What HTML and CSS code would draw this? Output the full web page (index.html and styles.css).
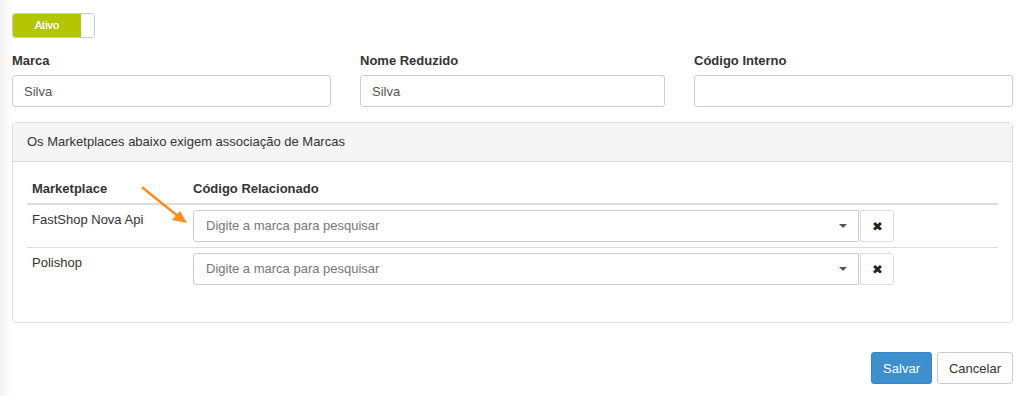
FILE: index.html
```html
<!DOCTYPE html>
<html lang="pt-BR">
<head>
    <meta charset="UTF-8">
    <meta name="viewport" content="width=device-width, initial-scale=1.0">
    <title>Marca</title>
    <link rel="stylesheet" href="styles.css">
</head>
<body>
    <div class="page">
        <div class="switch">
            <span class="switch-on">Ativo</span>
            <span class="switch-off"></span>
        </div>

        <div class="fields">
            <div class="field">
                <label>Marca</label>
                <input type="text" value="Silva">
            </div>
            <div class="field">
                <label>Nome Reduzido</label>
                <input type="text" value="Silva">
            </div>
            <div class="field">
                <label>Código Interno</label>
                <input type="text" value="">
            </div>
        </div>

        <div class="panel">
            <div class="panel-heading">Os Marketplaces abaixo exigem associação de Marcas</div>
            <div class="panel-body">
                <table class="grid">
                    <thead>
                        <tr>
                            <th class="col-mp">Marketplace</th>
                            <th>Código Relacionado</th>
                        </tr>
                    </thead>
                    <tbody>
                        <tr>
                            <td class="col-mp">FastShop Nova Api</td>
                            <td>
                                <div class="picker">
                                    <div class="combo">
                                        <span class="placeholder">Digite a marca para pesquisar</span>
                                        <span class="caret"></span>
                                    </div>
                                    <button type="button" class="clear">&#10006;</button>
                                </div>
                            </td>
                        </tr>
                        <tr>
                            <td class="col-mp">Polishop</td>
                            <td>
                                <div class="picker">
                                    <div class="combo">
                                        <span class="placeholder">Digite a marca para pesquisar</span>
                                        <span class="caret"></span>
                                    </div>
                                    <button type="button" class="clear">&#10006;</button>
                                </div>
                            </td>
                        </tr>
                    </tbody>
                </table>
            </div>
        </div>

        <div class="actions">
            <button type="button" class="btn btn-primary">Salvar</button>
            <button type="button" class="btn">Cancelar</button>
        </div>

        <svg class="pointer" width="60" height="50" viewBox="0 0 60 50">
            <line x1="3" y1="3" x2="39" y2="32" stroke="#f7901e" stroke-width="2.6" stroke-linecap="round"/>
            <polygon points="47,38 32,35 40,26" fill="#f7901e"/>
        </svg>
    </div>
</body>
</html>
```

FILE: styles.css
```css
body
{
    margin: 0;
    font-family: "Liberation Sans", Arial, sans-serif;
    font-size: 13px;
    color: #333;
    background: linear-gradient(to right, #f3f3f3, #ffffff 12px);
}
.page
{
    position: relative;
    width: 1001px;
    padding: 13px 11px 0 12px;
}
.switch
{
    display: flex;
    width: 83px;
    height: 25px;
    border: 1px solid #ccc;
    border-radius: 3px;
    box-sizing: border-box;
    overflow: hidden;
    margin-bottom: 14px;
}
.switch-on
{
    width: 68px;
    background: #b4c502;
    color: white;
    font-size: 11px;
    line-height: 23px;
    text-align: center;
    text-shadow: 0 0 0.4px white;
}
.switch-off
{
    flex: 1;
    background: white;
}
.fields
{
    display: grid;
    grid-template-columns: 319px 305px 319px;
    column-gap: 29px;
}
.field label
{
    display: block;
    font-weight: bold;
    line-height: 18px;
    margin-bottom: 5px;
}
.field input
{
    width: 100%;
    height: 32px;
    box-sizing: border-box;
    border: 1px solid #ccc;
    border-radius: 3px;
    padding: 0 11px;
    font-family: inherit;
    font-size: 13px;
    color: #555;
}
.panel
{
    margin-top: 15px;
    border: 1px solid #ddd;
    border-radius: 4px;
}
.panel-heading
{
    background: #f5f5f5;
    border-bottom: 1px solid #ddd;
    padding: 10px 14px;
    line-height: 18px;
    color: #333;
}
.panel-body
{
    padding: 15px 14px;
}
.grid
{
    width: 100%;
    border-collapse: collapse;
    margin-bottom: 17px;
}
.grid th
{
    text-align: left;
    font-weight: bold;
    line-height: 18px;
    padding: 3px 5px 5px;
    border-bottom: 2px solid #ddd;
}
.grid td
{
    vertical-align: top;
    line-height: 20px;
    padding: 5px;
}
.grid tbody tr:first-child td
{
    border-bottom: 1px solid #ddd;
}
.col-mp
{
    width: 151px;
}
.picker
{
    display: flex;
    gap: 1px;
}
.combo
{
    width: 666px;
    height: 32px;
    box-sizing: border-box;
    border: 1px solid #ccc;
    border-radius: 3px 0 0 3px;
    display: flex;
    align-items: center;
    justify-content: space-between;
    padding: 0 11px 0 12px;
}
.placeholder
{
    color: #777;
}
.caret
{
    width: 0;
    height: 0;
    border-left: 4px solid transparent;
    border-right: 4px solid transparent;
    border-top: 4px solid #555;
}
.clear
{
    width: 34px;
    height: 32px;
    border: 1px solid #ddd;
    border-radius: 0 3px 3px 0;
    background: white;
    color: #222;
    font-size: 13px;
    padding: 0;
    cursor: pointer;
}
.actions
{
    display: flex;
    justify-content: flex-end;
    gap: 5px;
    margin-top: 29px;
}
.btn
{
    height: 32px;
    padding: 0 11px;
    border: 1px solid #ccc;
    border-radius: 3px;
    background: white;
    color: #333;
    font-family: inherit;
    font-size: 13px;
    cursor: pointer;
}
.btn-primary
{
    background: #3d8fce;
    border-color: #3585c2;
    color: white;
}
.pointer
{
    position: absolute;
    left: 140px;
    top: 185px;
}
```
